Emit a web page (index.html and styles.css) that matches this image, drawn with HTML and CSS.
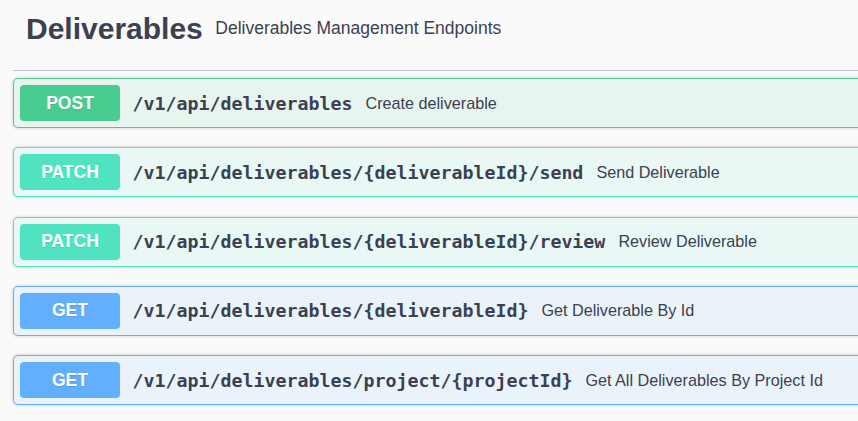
FILE: index.html
```html
<!DOCTYPE html>
<html>
<head>
<meta charset="utf-8">
<link rel="stylesheet" href="styles.css">
</head>
<body>
<div class="wrap">
  <div class="tag">
    <span class="tag-name">Deliverables</span>
    <small class="tag-desc">Deliverables Management Endpoints</small>
  </div>
  <div class="ops">
    <div class="op op-post">
      <span class="method">POST</span>
      <span class="path">/v1/api/deliverables</span>
      <span class="desc">Create deliverable</span>
    </div>
    <div class="op op-patch">
      <span class="method">PATCH</span>
      <span class="path">/v1/api/deliverables/{deliverableId}/send</span>
      <span class="desc">Send Deliverable</span>
    </div>
    <div class="op op-patch">
      <span class="method">PATCH</span>
      <span class="path">/v1/api/deliverables/{deliverableId}/review</span>
      <span class="desc">Review Deliverable</span>
    </div>
    <div class="op op-get">
      <span class="method">GET</span>
      <span class="path">/v1/api/deliverables/{deliverableId}</span>
      <span class="desc">Get Deliverable By Id</span>
    </div>
    <div class="op op-get">
      <span class="method">GET</span>
      <span class="path">/v1/api/deliverables/project/{projectId}</span>
      <span class="desc">Get All Deliverables By Project Id</span>
    </div>
  </div>
</div>
</body>
</html>
```
FILE: styles.css
```css
html, body {
  margin: 0;
  padding: 0;
  background: #fafafa;
  overflow: hidden;
}
body {
  font-family: "Liberation Sans", Arial, sans-serif;
  color: #3b4151;
}
.wrap {
  width: 1000px;
  margin-left: 13px;
}
.tag {
  display: flex;
  align-items: center;
  height: 57.5px;
  padding: 0 0 12.5px 13px;
  border-bottom: 1px solid rgba(59, 65, 81, 0.3);
  margin-bottom: 7px;
}
.tag-name {
  font-size: 30px;
  font-weight: 700;
  line-height: 1;
}
.tag-desc {
  font-size: 17.5px;
  padding: 0 12.5px;
  line-height: 1;
}
.ops {
  display: flex;
  flex-direction: column;
}
.op {
  display: flex;
  align-items: center;
  box-sizing: border-box;
  height: 50px;
  padding: 0 6px;
  border: 1px solid;
  border-radius: 5px;
  box-shadow: 0 0 3.75px rgba(0, 0, 0, 0.19);
  margin-bottom: 19.25px;
}
.method {
  min-width: 100px;
  height: 36px;
  display: flex;
  align-items: center;
  justify-content: center;
  border-radius: 4px;
  color: #fff;
  font-size: 17.5px;
  font-weight: 700;
  text-shadow: 0 1px 0 rgba(0, 0, 0, 0.1);
}
.path {
  font-family: "DejaVu Sans Mono", monospace;
  font-size: 18.27px;
  font-weight: 700;
  padding: 0 13px 0 12.5px;
  color: #3b4151;
}
.desc {
  font-size: 16.2px;
  color: #3b4151;
}
.op-post { border-color: #49cc90; background: #e8f5ef; }
.op-post .method { background: #49cc90; }
.op-patch { border-color: #50e3c2; background: #e9f8f4; }
.op-patch .method { background: #50e3c2; }
.op-get { border-color: #61affe; background: #ebf3fa; }
.op-get .method { background: #61affe; }
```
